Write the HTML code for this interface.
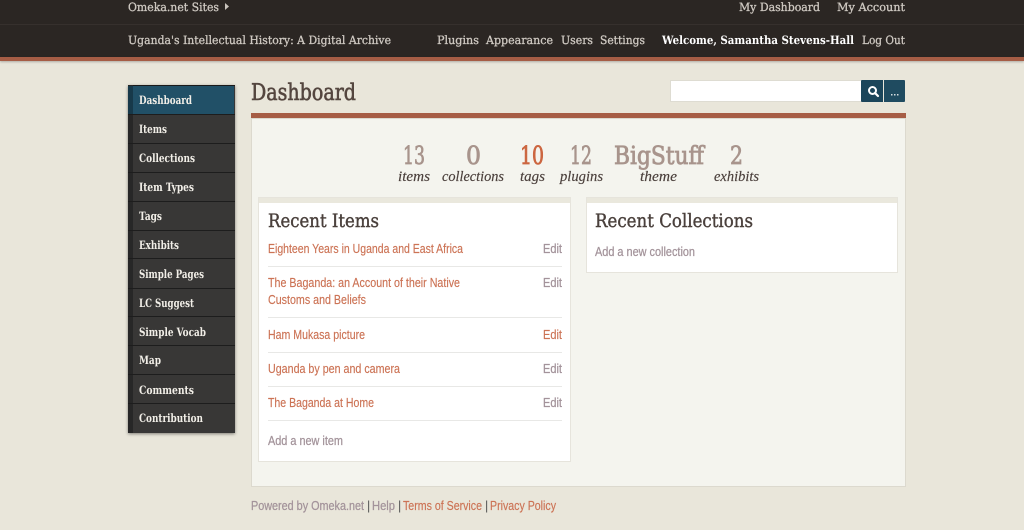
<!DOCTYPE html>
<html>
<head>
<meta charset="utf-8">
<style>
html,body{margin:0;padding:0;width:1024px;height:530px;overflow:hidden;background:#e9e6da}
.b{position:absolute}
svg{position:absolute;left:0;top:0}
.s{font-family:"DejaVu Serif","Liberation Serif",serif}
.c{font-family:"Liberation Sans",sans-serif}
.nav{font-size:11.500px;fill:#cfc9c2;stroke:#cfc9c2;stroke-width:.3px}
.bd{font-weight:bold;stroke-width:0}
.side{font-size:11.500px;font-weight:bold;fill:#f2efe8}
.num{font-size:25px;fill:#a8948c;stroke:#a8948c;stroke-width:.8px}
.lab{font-family:"Liberation Serif",serif;font-style:italic;font-size:14.500px;fill:#4a3f3b;stroke:#4a3f3b;stroke-width:.15px}
.lnk{font-size:12.500px;fill:#cc7355;stroke:#cc7355;stroke-width:.15px}
.gr{font-size:12.500px;fill:#a3939a;stroke:#a3939a;stroke-width:.25px}
.pipe{font-size:12.500px;fill:#555}
.h2{font-size:18.500px;fill:#4a403c;stroke:#4a403c;stroke-width:.4px}
</style>
</head>
<body>
<div class="b" style="left:0;top:0;width:1024px;height:57px;background:#2b2623"></div>
<div class="b" style="left:0;top:24px;width:1024px;height:1px;background:#36302d"></div>
<div class="b" style="left:0;top:57px;width:1024px;height:4px;background:#a65d45;box-shadow:0 1px 2px rgba(0,0,0,.25)"></div>

<div class="b" style="left:128px;top:85px;width:107px;height:348px;background:#383736;box-shadow:0 1px 3px rgba(0,0,0,.45)"></div>
<div class="b" style="left:128px;top:85px;width:107px;height:1px;background:#1a1a1a"></div>
<div class="b" style="left:133px;top:86px;width:101px;height:28px;background:#215067"></div>
<div class="b" style="left:128px;top:85px;width:5px;height:348px;background:#272727"></div>
<div class="b" style="left:128px;top:86px;width:5px;height:28px;background:#17394a"></div>
<div class="b" style="left:128px;top:114px;width:107px;height:1px;background:#1d1d1d"></div>
<div class="b" style="left:128px;top:143px;width:107px;height:1px;background:#1d1d1d"></div>
<div class="b" style="left:128px;top:172px;width:107px;height:1px;background:#1d1d1d"></div>
<div class="b" style="left:128px;top:201px;width:107px;height:1px;background:#1d1d1d"></div>
<div class="b" style="left:128px;top:230px;width:107px;height:1px;background:#1d1d1d"></div>
<div class="b" style="left:128px;top:258px;width:107px;height:1px;background:#1d1d1d"></div>
<div class="b" style="left:128px;top:288px;width:107px;height:1px;background:#1d1d1d"></div>
<div class="b" style="left:128px;top:316px;width:107px;height:1px;background:#1d1d1d"></div>
<div class="b" style="left:128px;top:345px;width:107px;height:1px;background:#1d1d1d"></div>
<div class="b" style="left:128px;top:374px;width:107px;height:1px;background:#1d1d1d"></div>
<div class="b" style="left:128px;top:403px;width:107px;height:1px;background:#1d1d1d"></div>

<div class="b" style="left:671px;top:81px;width:190px;height:20px;background:#fff;box-shadow:0 0 0 1px #dedcd2"></div>
<div class="b" style="left:861px;top:80px;width:22px;height:22px;background:#1b455a;border-radius:1px 0 0 1px"></div>
<div class="b" style="left:884px;top:80px;width:21px;height:22px;background:#1f4b60;border-radius:0 1px 1px 0"></div>

<div class="b" style="left:251px;top:118px;width:655px;height:369px;background:#f4f4ee;box-shadow:inset 0 0 0 1px #dcd9ce"></div>
<div class="b" style="left:251px;top:113px;width:655px;height:5px;background:#a65d45"></div>

<div class="b" style="left:259px;top:198px;width:311px;height:263px;background:#fff;box-shadow:0 0 0 1px #e6e4dc"></div>
<div class="b" style="left:259px;top:198px;width:311px;height:5px;background:#eae8dd"></div>
<div class="b" style="left:587px;top:198px;width:310px;height:74px;background:#fff;box-shadow:0 0 0 1px #e6e4dc"></div>
<div class="b" style="left:587px;top:198px;width:310px;height:5px;background:#eae8dd"></div>

<div class="b" style="left:268px;top:266px;width:294px;height:1px;background:#e8e8e6"></div>
<div class="b" style="left:268px;top:317px;width:294px;height:1px;background:#e8e8e6"></div>
<div class="b" style="left:268px;top:352px;width:294px;height:1px;background:#e8e8e6"></div>
<div class="b" style="left:268px;top:386px;width:294px;height:1px;background:#e8e8e6"></div>
<div class="b" style="left:268px;top:420px;width:294px;height:1px;background:#e8e8e6"></div>

<svg width="1024" height="530" viewBox="0 0 1024 530" xmlns="http://www.w3.org/2000/svg">
<g class="s" text-rendering="geometricPrecision">
<text class="nav" x="128" y="11" textLength="91" lengthAdjust="spacingAndGlyphs">Omeka.net Sites</text>
<path d="M225 3l4 3.500-4 3.500z" fill="#c9c3bc"/>
<text class="nav" x="739" y="11" textLength="81" lengthAdjust="spacingAndGlyphs">My Dashboard</text>
<text class="nav" x="837" y="11" textLength="68" lengthAdjust="spacingAndGlyphs">My Account</text>
<text class="nav" x="128" y="44" textLength="263" lengthAdjust="spacingAndGlyphs">Uganda's Intellectual History: A Digital Archive</text>
<text class="nav" x="437" y="44" textLength="42" lengthAdjust="spacingAndGlyphs">Plugins</text>
<text class="nav" x="486" y="44" textLength="67" lengthAdjust="spacingAndGlyphs">Appearance</text>
<text class="nav" x="561" y="44" textLength="32" lengthAdjust="spacingAndGlyphs">Users</text>
<text class="nav" x="600" y="44" textLength="45" lengthAdjust="spacingAndGlyphs">Settings</text>
<text class="nav bd" x="662" y="44" textLength="192" lengthAdjust="spacingAndGlyphs" style="fill:#fff">Welcome, Samantha Stevens-Hall</text>
<text class="nav" x="862" y="44" textLength="43" lengthAdjust="spacingAndGlyphs">Log Out</text>

<text class="side" x="139" y="104" textLength="53" lengthAdjust="spacingAndGlyphs">Dashboard</text>
<text class="side" x="139" y="133" textLength="28" lengthAdjust="spacingAndGlyphs">Items</text>
<text class="side" x="139" y="162" textLength="56" lengthAdjust="spacingAndGlyphs">Collections</text>
<text class="side" x="139" y="191" textLength="55" lengthAdjust="spacingAndGlyphs">Item Types</text>
<text class="side" x="139" y="220" textLength="23" lengthAdjust="spacingAndGlyphs">Tags</text>
<text class="side" x="139" y="249" textLength="40" lengthAdjust="spacingAndGlyphs">Exhibits</text>
<text class="side" x="139" y="278" textLength="65" lengthAdjust="spacingAndGlyphs">Simple Pages</text>
<text class="side" x="139" y="307" textLength="55" lengthAdjust="spacingAndGlyphs">LC Suggest</text>
<text class="side" x="139" y="336" textLength="67" lengthAdjust="spacingAndGlyphs">Simple Vocab</text>
<text class="side" x="139" y="364" textLength="22" lengthAdjust="spacingAndGlyphs">Map</text>
<text class="side" x="139" y="394" textLength="55" lengthAdjust="spacingAndGlyphs">Comments</text>
<text class="side" x="139" y="422" textLength="64" lengthAdjust="spacingAndGlyphs">Contribution</text>

<text x="251" y="100" font-size="23" fill="#54463f" stroke="#54463f" stroke-width=".6" textLength="105" lengthAdjust="spacingAndGlyphs">Dashboard</text>

<text class="num" x="403" y="164" textLength="22" lengthAdjust="spacingAndGlyphs">13</text>
<text class="num" x="466" y="164" textLength="15" lengthAdjust="spacingAndGlyphs">0</text>
<text class="num" x="520" y="164" textLength="24" lengthAdjust="spacingAndGlyphs" style="fill:#cc6640;stroke:#cc6640">10</text>
<text class="num" x="570" y="164" textLength="22" lengthAdjust="spacingAndGlyphs">12</text>
<text class="num" x="614" y="164" textLength="90" lengthAdjust="spacingAndGlyphs">BigStuff</text>
<text class="num" x="730" y="164" textLength="13" lengthAdjust="spacingAndGlyphs">2</text>

<text class="h2" x="268" y="227" textLength="111" lengthAdjust="spacingAndGlyphs">Recent Items</text>
<text class="h2" x="595" y="227" textLength="158" lengthAdjust="spacingAndGlyphs">Recent Collections</text>
</g>
<text class="lab" x="398" y="181" textLength="32" lengthAdjust="spacingAndGlyphs">items</text>
<text class="lab" x="442" y="181" textLength="62" lengthAdjust="spacingAndGlyphs">collections</text>
<text class="lab" x="520" y="181" textLength="25" lengthAdjust="spacingAndGlyphs">tags</text>
<text class="lab" x="560" y="181" textLength="43" lengthAdjust="spacingAndGlyphs">plugins</text>
<text class="lab" x="640" y="181" textLength="37" lengthAdjust="spacingAndGlyphs">theme</text>
<text class="lab" x="714" y="181" textLength="45" lengthAdjust="spacingAndGlyphs">exhibits</text>

<g class="c">
<text class="lnk" x="268" y="253" textLength="195" lengthAdjust="spacingAndGlyphs">Eighteen Years in Uganda and East Africa</text>
<text class="gr" x="543" y="253" textLength="19" lengthAdjust="spacingAndGlyphs">Edit</text>
<text class="lnk" x="268" y="287" textLength="192" lengthAdjust="spacingAndGlyphs">The Baganda: an Account of their Native</text>
<text class="lnk" x="268" y="304" textLength="98" lengthAdjust="spacingAndGlyphs">Customs and Beliefs</text>
<text class="gr" x="543" y="287" textLength="19" lengthAdjust="spacingAndGlyphs">Edit</text>
<text class="lnk" x="268" y="339" textLength="97" lengthAdjust="spacingAndGlyphs">Ham Mukasa picture</text>
<text class="lnk" x="543" y="339" textLength="19" lengthAdjust="spacingAndGlyphs">Edit</text>
<text class="lnk" x="268" y="373" textLength="132" lengthAdjust="spacingAndGlyphs">Uganda by pen and camera</text>
<text class="gr" x="543" y="373" textLength="19" lengthAdjust="spacingAndGlyphs">Edit</text>
<text class="lnk" x="268" y="407" textLength="106" lengthAdjust="spacingAndGlyphs">The Baganda at Home</text>
<text class="gr" x="543" y="407" textLength="19" lengthAdjust="spacingAndGlyphs">Edit</text>
<text class="gr" x="268" y="445" textLength="75" lengthAdjust="spacingAndGlyphs">Add a new item</text>
<text class="gr" x="595" y="256" textLength="100" lengthAdjust="spacingAndGlyphs">Add a new collection</text>

<text class="gr" x="251" y="510" textLength="113" lengthAdjust="spacingAndGlyphs">Powered by Omeka.net</text>
<text class="pipe" x="367" y="510">|</text>
<text class="gr" x="372" y="510" textLength="23" lengthAdjust="spacingAndGlyphs">Help</text>
<text class="pipe" x="398" y="510">|</text>
<text class="lnk" x="403" y="510" textLength="79" lengthAdjust="spacingAndGlyphs">Terms of Service</text>
<text class="pipe" x="485" y="510">|</text>
<text class="lnk" x="490" y="510" textLength="66" lengthAdjust="spacingAndGlyphs">Privacy Policy</text>
</g>

<circle cx="872.500" cy="90.500" r="3.500" fill="none" stroke="#fff" stroke-width="2"/>
<path d="M875 93l3 3" stroke="#fff" stroke-width="2.200" stroke-linecap="round"/>
<rect x="891" y="94" width="1.500" height="1.500" fill="#d5dde0"/>
<rect x="894" y="94" width="1.500" height="1.500" fill="#d5dde0"/>
<rect x="897" y="94" width="1.500" height="1.500" fill="#d5dde0"/>
</svg>
</body>
</html>
